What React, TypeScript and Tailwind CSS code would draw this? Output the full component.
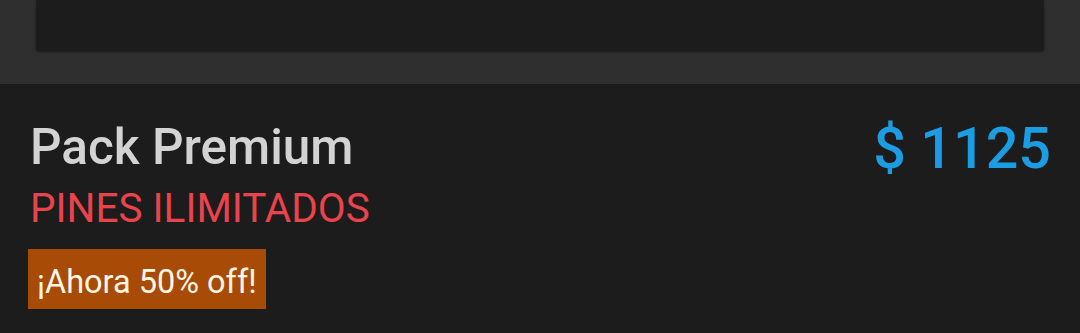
export default function App() {
  return (
    <div className="min-h-screen bg-[#1c1c1c] font-['Roboto',sans-serif]">
      <div className="h-[84px] bg-[#2f2f2f] px-[36px]">
        <div className="h-[51px] rounded-b-[4px] bg-[#1c1c1c] shadow-[0_1px_3px_rgba(0,0,0,0.45)]" />
      </div>
      <div className="flex items-start justify-between pl-[30px] pr-[29px] pt-[36px]">
        <div className="flex flex-col items-start pt-[2px]">
          <h2 className="text-[49.5px] leading-[50px] font-medium text-[#d3d3d3]">Pack Premium</h2>
          <p className="mt-[16px] text-[40.5px] leading-[40px] text-[#e9434b]">PINES ILIMITADOS</p>
          <span className="-ml-[2px] mt-[21px] h-[60px] bg-[#a84b06] px-[9px] pt-[6px] text-[32.5px] leading-[54px] text-[#fff6e6]">
            ¡Ahora 50% off!
          </span>
        </div>
        <div className="text-[57.5px] leading-[58px] font-medium text-[#1c9de2]">$ 1125</div>
      </div>
    </div>
  );
}
